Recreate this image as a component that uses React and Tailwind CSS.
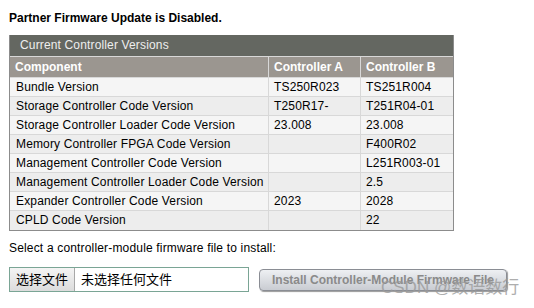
import React from "react";

const rows = [
  ["Bundle Version", "TS250R023", "TS251R004"],
  ["Storage Controller Code Version", "T250R17-", "T251R04-01"],
  ["Storage Controller Loader Code Version", "23.008", "23.008"],
  ["Memory Controller FPGA Code Version", "", "F400R02"],
  ["Management Controller Code Version", "", "L251R003-01"],
  ["Management Controller Loader Code Version", "", "2.5"],
  ["Expander Controller Code Version", "2023", "2028"],
  ["CPLD Code Version", "", "22"],
];

export default function App() {
  return (
    <div
      className="w-[534px] h-[308px] bg-white relative overflow-hidden text-black"
      style={{ fontFamily: '"Liberation Sans", Arial, "Noto Sans CJK SC", sans-serif' }}
    >
      <div className="pl-[9px] pt-[11px]">
        <div className="text-[12px] font-bold leading-[15px]">Partner Firmware Update is Disabled.</div>
        <div className="mt-[9px] w-[445px] border-x border-b border-[#8c8c8c]">
          <div className="h-[21px] bg-[#646761] text-[#eeeeee] text-[12px] tracking-[0.15px] leading-[21px] pl-[10px]">
            Current Controller Versions
          </div>
          <div className="grid grid-cols-[259px_92px_92px] bg-[#9b9690] text-white font-bold text-[12px] h-[22px] border-b border-[#d8d8d8]">
            <div className="border-t border-r border-[#d8d8d8] pl-[5px] leading-[20px]">Component</div>
            <div className="border-t border-r border-[#d8d8d8] pl-[5px] leading-[20px]">Controller A</div>
            <div className="border-t border-[#d8d8d8] pl-[5px] leading-[20px]">Controller B</div>
          </div>
          {rows.map((r, i) => (
            <div
              key={i}
              className={`grid grid-cols-[259px_92px_92px] text-[12px] tracking-[0.15px] ${
                i === rows.length - 1 ? "h-[19px]" : "h-[19px] border-b border-[#d8d8d8]"
              } ${i % 2 === 0 ? "bg-[#f5f5f5]" : "bg-[#ededed]"}`}
            >
              <div className="border-r border-[#d8d8d8] pl-[6px] leading-[19px] whitespace-nowrap">{r[0]}</div>
              <div className="border-r border-[#d8d8d8] pl-[5px] leading-[19px]">{r[1]}</div>
              <div className="pl-[5px] leading-[19px]">{r[2]}</div>
            </div>
          ))}
        </div>
        <div className="mt-[10px] text-[12px] tracking-[0.17px] leading-[15px]">
          Select a controller-module firmware file to install:
        </div>
        <div className="mt-[11px] flex items-center">
          <div className="flex items-center w-[240px] h-[25px] border border-[#7aa595] bg-white">
            <div className="h-full px-[6px] flex items-center bg-gradient-to-b from-[#f4f4f4] to-[#dcdcdc] border-r border-[#a8a8a8] text-[13px]">
              选择文件
            </div>
            <div className="pl-[6px] text-[13px]">未选择任何文件</div>
          </div>
          <div className="ml-[10px] w-[248px] h-[22px] rounded-[4px] border border-[#8a8d94] bg-gradient-to-b from-[#eef0f3] to-[#c9ccd2] shadow-[1px_1px_1px_#9a9a9a] text-[#8a8a8a] font-bold text-[12px] flex items-center justify-center">
            Install Controller-Module Firmware File
          </div>
        </div>
      </div>
      <div className="absolute left-[381px] top-[278px] text-[17px] leading-[20px] text-[#9a9a9a] opacity-80 whitespace-nowrap">
        CSDN @数语数行
      </div>
    </div>
  );
}
